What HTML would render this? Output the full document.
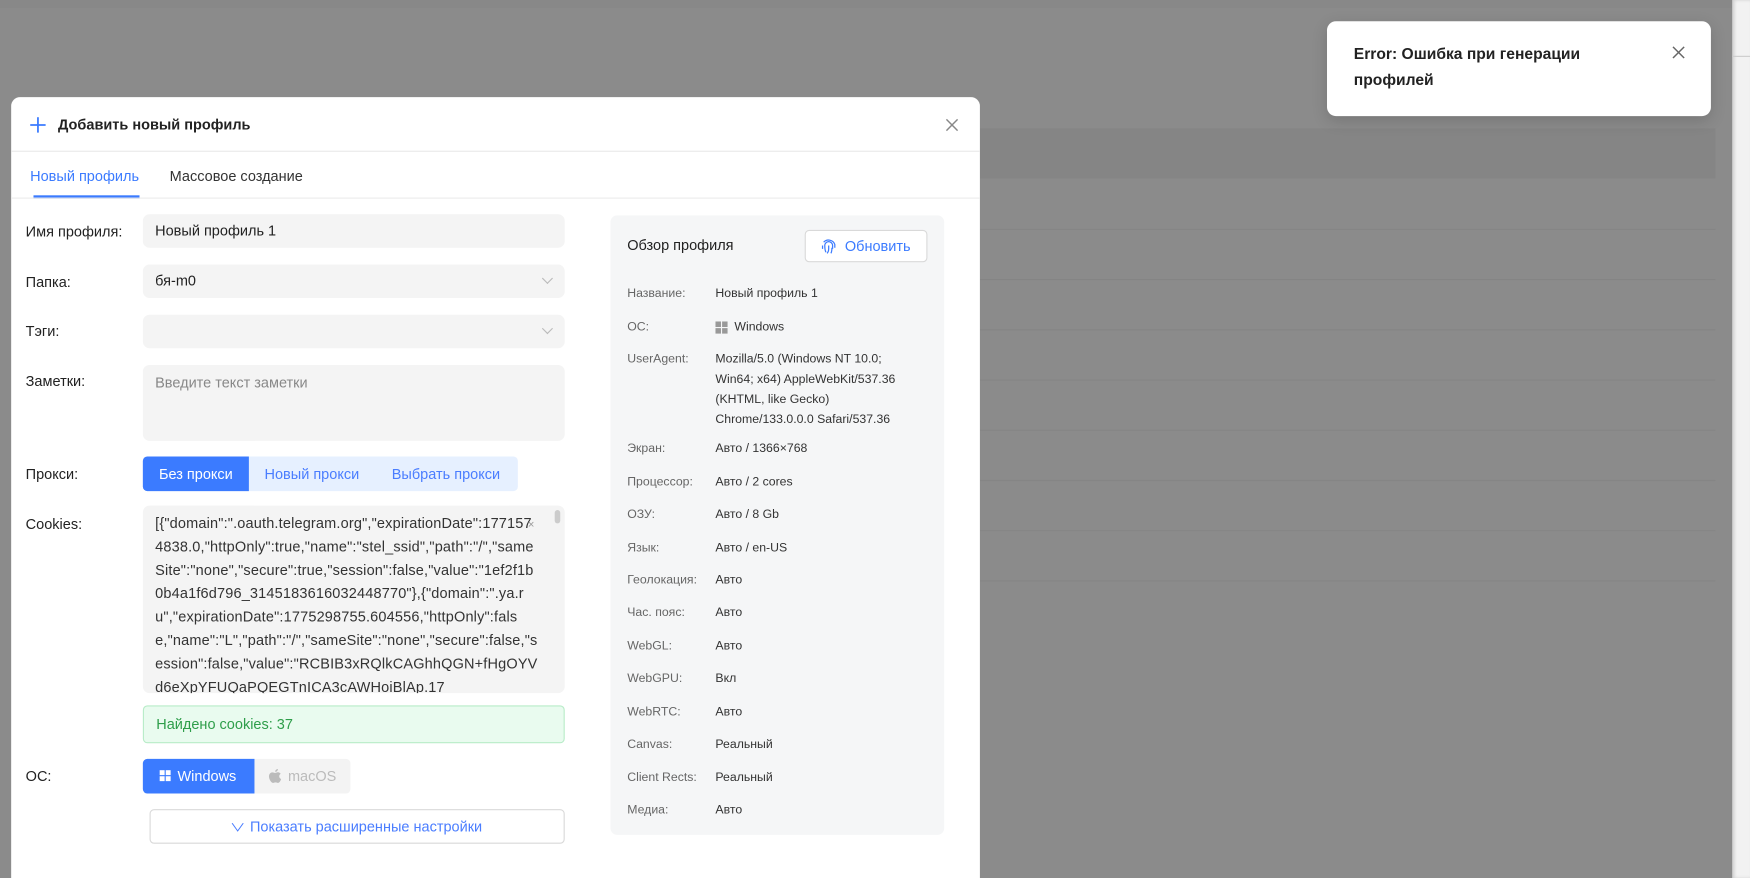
<!DOCTYPE html>
<html><head><meta charset="utf-8"><style>
*{box-sizing:border-box;margin:0;padding:0}
body{width:1750px;height:878px;overflow:hidden;background:#8b8b8b;font-family:"Liberation Sans","Noto Sans CJK SC",sans-serif;position:relative;color:#1f1f1f}
#w{position:absolute;left:0;top:0;width:1568px;height:787px;transform:scale(1.11607);transform-origin:0 0}
.abs{position:absolute}
.line{position:absolute;left:878px;width:659px;height:1px;background:#858585}
.lbl{position:absolute;left:23px;font-size:13px;color:#222}
.inp{position:absolute;left:128px;width:378px;background:#f4f4f4;border-radius:6px;font-size:13px;color:#222;padding-left:11px}
.chev{position:absolute;right:12px;top:9px;width:7px;height:7px;border-right:1px solid #bbb;border-bottom:1px solid #bbb;transform:rotate(45deg)}
.r{position:absolute;left:562px;font-size:11px;color:#666}
.v{position:absolute;left:641px;font-size:11px;color:#333;line-height:18px}
</style></head><body><div id="w">
<div class="abs" style="left:0;top:0;width:1568px;height:7px;background:#888"></div>
<div class="abs" style="left:1552px;top:0;width:16px;height:787px;background:#f2f2f2;box-shadow:inset 2px 0 3px rgba(0,0,0,.15)"></div>
<div class="abs" style="left:1552px;top:50px;width:16px;height:1px;background:#ccc"></div>
<div class="abs" style="left:878px;top:115px;width:659px;height:45px;background:#858585"></div>
<div class="line" style="top:205px"></div><div class="line" style="top:250px"></div><div class="line" style="top:295px"></div><div class="line" style="top:340px"></div><div class="line" style="top:385px"></div><div class="line" style="top:430px"></div><div class="line" style="top:475px"></div><div class="line" style="top:520px"></div>

<div class="abs" style="left:1189px;top:19px;width:344px;height:85px;background:#fff;border-radius:8px;box-shadow:0 4px 14px rgba(0,0,0,.15)">
<div class="abs" style="left:24px;top:18px;font-size:14px;line-height:23px;color:#222;font-weight:bold;width:260px">Error: Ошибка при генерации профилей</div>
<svg class="abs" style="left:309px;top:22px" width="12" height="12"><path d="M1 1L11 11M11 1L1 11" stroke="#666" stroke-width="1.3"/></svg>
</div>

<div class="abs" style="left:10px;top:87px;width:868px;height:700px;background:#fff;border-radius:8px 8px 0 0">
<svg class="abs" style="left:17px;top:18px" width="14" height="14"><path d="M7 0V14M0 7H14" stroke="#3b7bff" stroke-width="1.6"/></svg>
<div class="abs" style="left:42px;top:17px;font-size:13px;font-weight:bold;color:#222">Добавить новый профиль</div>
<svg class="abs" style="left:837px;top:19px" width="12" height="12"><path d="M1 1L11 11M11 1L1 11" stroke="#888" stroke-width="1.3"/></svg>
<div class="abs" style="left:0;top:48px;width:868px;height:1px;background:#e8e8e8"></div>
<div class="abs" style="left:17px;top:63px;font-size:13px;color:#3b7bff">Новый профиль</div>
<div class="abs" style="left:142px;top:63px;font-size:13px;color:#333">Массовое создание</div>
<div class="abs" style="left:20px;top:88px;width:95px;height:3px;background:#3b7bff"></div>
<div class="abs" style="left:0;top:90px;width:868px;height:1px;background:#ececec"></div>
</div>

<div class="lbl" style="top:200px">Имя профиля:</div>
<div class="inp" style="top:192px;height:30px;line-height:30px">Новый профиль 1</div>
<div class="lbl" style="top:245px">Папка:</div>
<div class="inp" style="top:237px;height:30px;line-height:30px">бя-m0<div class="chev"></div></div>
<div class="lbl" style="top:289px">Тэги:</div>
<div class="inp" style="top:282px;height:30px"><div class="chev"></div></div>
<div class="lbl" style="top:334px">Заметки:</div>
<div class="inp" style="top:327px;height:68px;padding-top:8px;color:#888">Введите текст заметки</div>
<div class="lbl" style="top:417px">Прокси:</div>
<div class="abs" style="left:128px;top:409px;width:336px;height:31px;background:#e6f0ff;border-radius:4px;font-size:13px;line-height:31px;color:#4a7dff">
<div class="abs" style="left:0;top:0;width:95px;height:31px;background:#3b7bff;color:#fff;border-radius:4px 0 0 4px;text-align:center">Без прокси</div>
<div class="abs" style="left:109px">Новый прокси</div><div class="abs" style="left:223px">Выбрать прокси</div></div>
<div class="lbl" style="top:462px">Cookies:</div>
<div class="inp" style="top:453px;height:168px;padding:5px 24px 0 11px;font-size:13px;line-height:21px;letter-spacing:0.15px;word-break:break-all;overflow:hidden;color:#333">[{"domain":".oauth.telegram.org","expirationDate":1771574838.0,"httpOnly":true,"name":"stel_ssid","path":"/","sameSite":"none","secure":true,"session":false,"value":"1ef2f1b0b4a1f6d796_3145183616032448770"},{"domain":".ya.ru","expirationDate":1775298755.604556,"httpOnly":false,"name":"L","path":"/","sameSite":"none","secure":false,"session":false,"value":"RCBIB3xRQlkCAGhhQGN+fHgOYVd6eXpYFUQaPQEGTnICA3cAWHoiBlAp.17</div>
<div class="abs" style="left:497px;top:457px;width:5px;height:12px;background:#ccc;border-radius:3px"></div>
<div class="abs" style="left:473px;top:465px;font-size:10px;color:#999">×</div>
<div class="abs" style="left:128px;top:632px;width:378px;height:34px;background:#e9fbef;border:1px solid #b8ecc8;border-radius:4px;font-size:13px;line-height:32px;color:#2e9e4a;padding-left:11px">Найдено cookies: 37</div>
<div class="lbl" style="top:688px">ОС:</div>
<div class="abs" style="left:128px;top:680px;width:186px;height:31px;background:#f3f3f3;border-radius:4px;font-size:13px;line-height:31px">
<div class="abs" style="left:0;top:0;width:100px;height:31px;background:#3b7bff;border-radius:4px 0 0 4px;color:#fff;padding-left:31px">Windows
<svg class="abs" style="left:15px;top:10px" width="10" height="10"><rect width="4.5" height="4.5" fill="#fff"/><rect x="5.5" width="4.5" height="4.5" fill="#fff"/><rect y="5.5" width="4.5" height="4.5" fill="#fff"/><rect x="5.5" y="5.5" width="4.5" height="4.5" fill="#fff"/></svg></div>
<svg class="abs" style="left:112px;top:8px" width="13" height="15"><path d="M9 1c0 1.5-1.2 2.6-2.4 2.5C6.5 2 7.8 1 9 1zM6.5 4.5c.8 0 1.5-.6 2.5-.6 1.2 0 2 .6 2.5 1.4-2 1.2-1.6 4 .4 4.7-.5 1.5-1.5 3.5-2.7 3.5-.9 0-1.1-.5-2.3-.5-1.2 0-1.5.5-2.3.5C3.3 13.5 1 10.5 1 7.6 1 5.4 2.5 4 4 4c1 0 1.7.5 2.5.5z" fill="#bbb"/></svg>
<div class="abs" style="left:130px;color:#bbb">macOS</div></div>
<div class="abs" style="left:134px;top:725px;width:372px;height:31px;border:1px solid #d9d9d9;border-radius:4px;text-align:center;font-size:13px;line-height:29px;color:#4a7dff"><span style="font-size:10px;display:inline-block;transform:scaleX(1.4);margin-right:6px">∨</span>Показать расширенные настройки</div>

<div class="abs" style="left:547px;top:193px;width:299px;height:555px;background:#f5f6f7;border-radius:6px"></div>
<div class="abs" style="left:562px;top:212px;font-size:13px;color:#222">Обзор профиля</div>
<div class="abs" style="left:721px;top:206px;width:110px;height:29px;background:#fff;border:1px solid #d9d9d9;border-radius:4px;font-size:13px;line-height:27px;color:#3b7bff;padding-left:35px">Обновить
<svg class="abs" style="left:13px;top:6px" width="15" height="15" fill="none" stroke="#3b7bff" stroke-width="1.1"><path d="M3 4a6 6 0 0 1 10 2v3M2 7v3M5 13c-1-2-1-4-1-6a3.5 3.5 0 0 1 7 0v3M7.5 7v3c0 2-1 3.5-1.5 4M9.5 14c.7-1.3.9-3 .9-5"/></svg></div>
<div class="r" style="top:257px">Название:</div><div class="v" style="top:254px">Новый профиль 1</div>
<div class="r" style="top:287px">ОС:</div><div class="v" style="top:284px;padding-left:17px">Windows<svg class="abs" style="left:0;top:4px" width="11" height="11"><rect width="5" height="5" fill="#999"/><rect x="6" width="5" height="5" fill="#999"/><rect y="6" width="5" height="5" fill="#999"/><rect x="6" y="6" width="5" height="5" fill="#999"/></svg></div>
<div class="r" style="top:316px">UserAgent:</div><div class="v" style="top:313px;width:180px">Mozilla/5.0 (Windows NT 10.0; Win64; x64) AppleWebKit/537.36 (KHTML, like Gecko) Chrome/133.0.0.0 Safari/537.36</div>
<div class="r" style="top:396px">Экран:</div><div class="v" style="top:393px">Авто / 1366×768</div>
<div class="r" style="top:426px">Процессор:</div><div class="v" style="top:423px">Авто / 2 cores</div>
<div class="r" style="top:455px">ОЗУ:</div><div class="v" style="top:452px">Авто / 8 Gb</div>
<div class="r" style="top:485px">Язык:</div><div class="v" style="top:482px">Авто / en-US</div>
<div class="r" style="top:514px">Геолокация:</div><div class="v" style="top:511px">Авто</div>
<div class="r" style="top:543px">Час. пояс:</div><div class="v" style="top:540px">Авто</div>
<div class="r" style="top:573px">WebGL:</div><div class="v" style="top:570px">Авто</div>
<div class="r" style="top:602px">WebGPU:</div><div class="v" style="top:599px">Вкл</div>
<div class="r" style="top:632px">WebRTC:</div><div class="v" style="top:629px">Авто</div>
<div class="r" style="top:661px">Canvas:</div><div class="v" style="top:658px">Реальный</div>
<div class="r" style="top:691px">Client Rects:</div><div class="v" style="top:688px">Реальный</div>
<div class="r" style="top:720px">Медиа:</div><div class="v" style="top:717px">Авто</div>
</div></body></html>
